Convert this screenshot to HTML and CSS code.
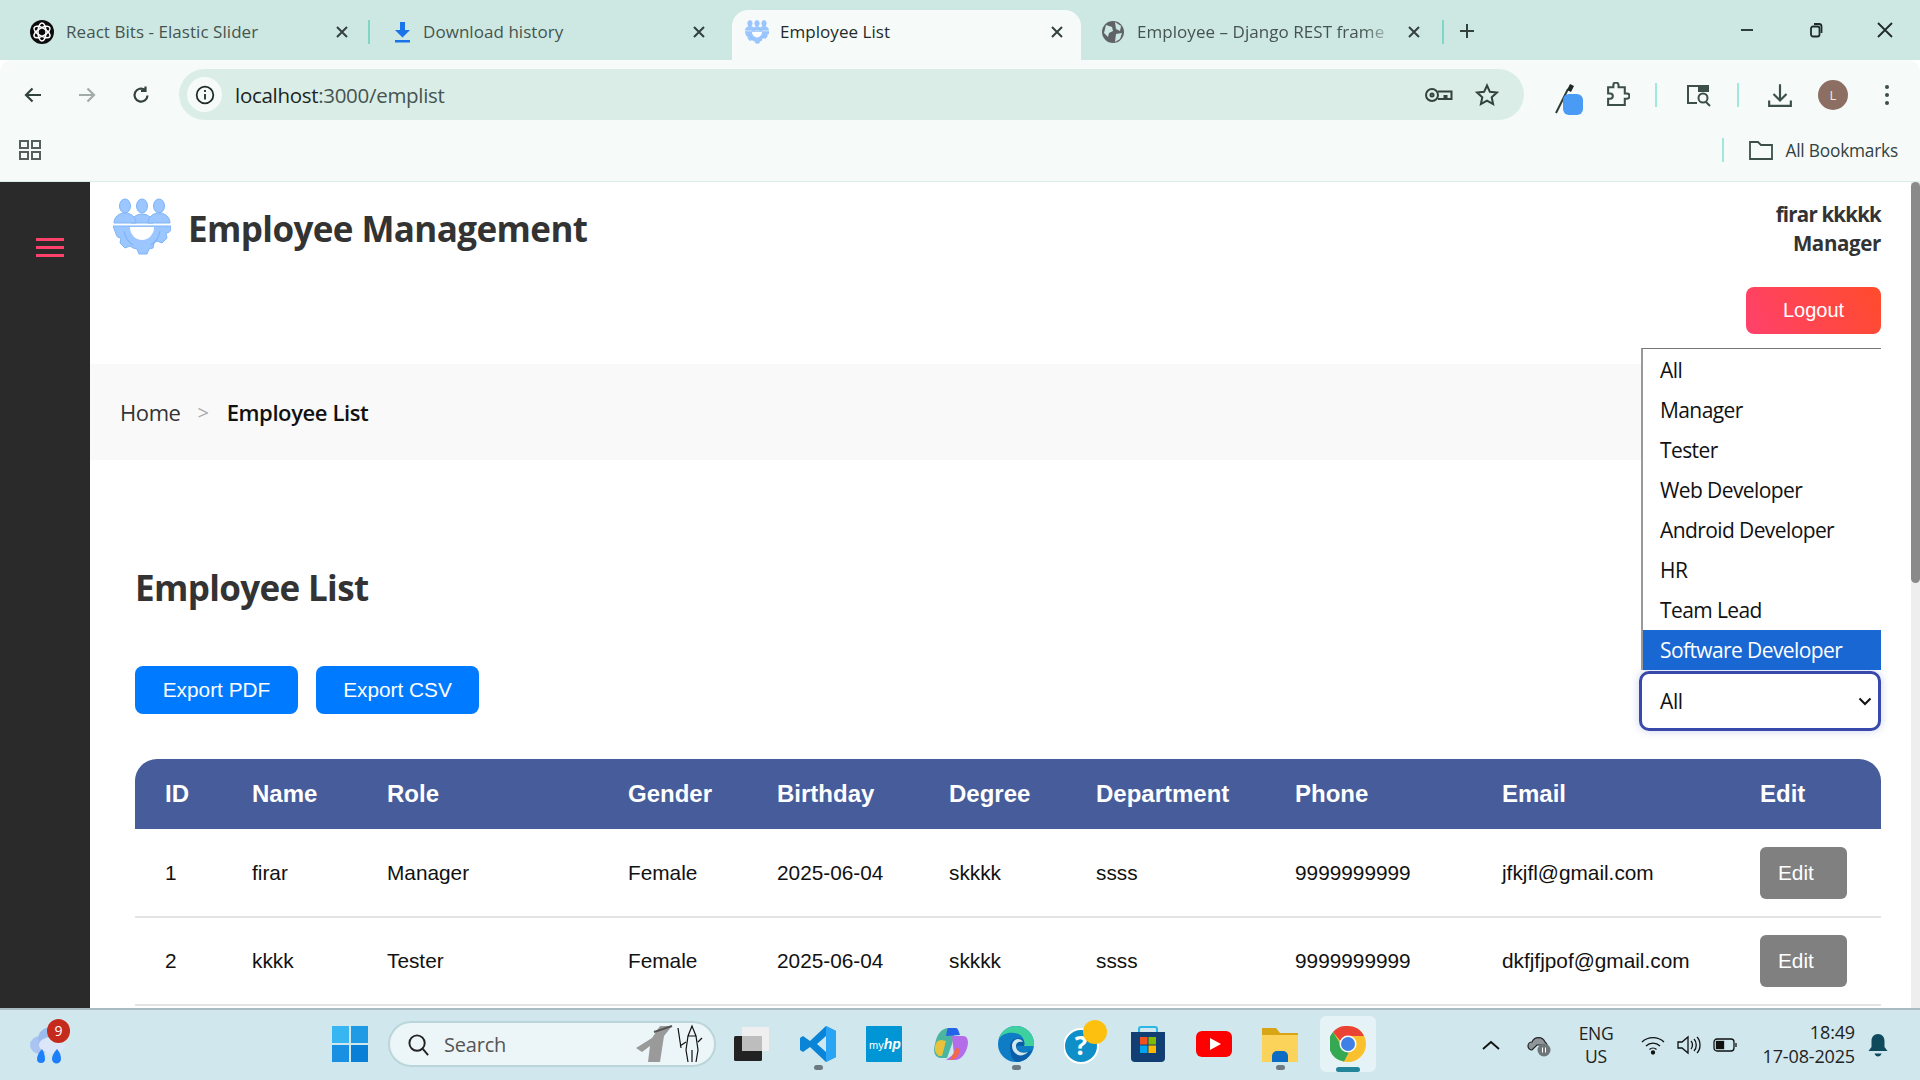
FILE: index.html
```html
<!DOCTYPE html>
<html lang="en">
<head>
    <meta charset="UTF-8">
    <title>Employee List</title>
    <link rel="stylesheet" href="styles.css">
</head>
<body>
<!-- Browser tabs -->
<div class="tabstrip">
    <div class="tab tab-first">
        <svg class="tab-icon" viewBox="0 0 24 24"><circle cx="12" cy="12" r="12" fill="#0b0b0b"/><g fill="none" stroke="#fff" stroke-width="1.5"><ellipse cx="12" cy="12" rx="9" ry="4" transform="rotate(30 12 12)"/><ellipse cx="12" cy="12" rx="9" ry="4" transform="rotate(90 12 12)"/><ellipse cx="12" cy="12" rx="9" ry="4" transform="rotate(150 12 12)"/></g></svg>
        <span class="tab-title">React Bits - Elastic Slider</span>
        <svg class="tab-close" viewBox="0 0 14 14"><path d="M2 2l10 10M12 2L2 12"/></svg>
    </div>
    <div class="tab-sep"></div>
    <div class="tab tab-second">
        <svg class="tab-icon" viewBox="0 0 24 24"><path d="M10 2h5v8h5l-7.500 7.500L5 10h5z" fill="#1a73e8"/><rect x="5" y="20" width="15" height="2.500" fill="#1a73e8"/></svg>
        <span class="tab-title">Download history</span>
        <svg class="tab-close" viewBox="0 0 14 14"><path d="M2 2l10 10M12 2L2 12"/></svg>
    </div>
    <div class="tab tab-active">
        <svg class="tab-icon" viewBox="0 0 58 58"><use href="#logo-mark"/></svg>
        <span class="tab-title">Employee List</span>
        <svg class="tab-close" viewBox="0 0 14 14"><path d="M2 2l10 10M12 2L2 12"/></svg>
    </div>
    <div class="tab tab-last">
        <svg class="tab-icon" viewBox="0 0 24 24"><circle cx="12" cy="12" r="11" fill="#5f6368"/><path d="M5 5l6 2 1 4-4 2-1 4-4-4zM14 2l6 4-1 5-4-2zM15 14l6-1-2 6-5 3z" fill="#cde8e2"/></svg>
        <span class="tab-title tab-title-fade">Employee – Django REST frame</span>
        <svg class="tab-close" viewBox="0 0 14 14"><path d="M2 2l10 10M12 2L2 12"/></svg>
    </div>
    <div class="tab-sep"></div>
    <svg class="new-tab" viewBox="0 0 16 16"><path d="M8 1v14M1 8h14"/></svg>
    <div class="window-btns">
        <svg viewBox="0 0 16 16"><path d="M2 8h12"/></svg>
        <svg viewBox="0 0 16 16"><rect x="3" y="4.500" width="8.500" height="10" rx="2"/><path d="M6 2h5a2.500 2.500 0 0 1 2.500 2.500V11"/></svg>
        <svg viewBox="0 0 16 16"><path d="M1 1l14 14M15 1L1 15"/></svg>
    </div>
</div>

<!-- Address bar -->
<div class="toolbar">
    <svg class="nav-icon" viewBox="0 0 18 18"><path d="M17 9H2M8.500 2.500L2 9l6.500 6.500"/></svg>
    <svg class="nav-icon nav-disabled" viewBox="0 0 18 18"><path d="M1 9h15M9.500 2.500L16 9l-6.500 6.500"/></svg>
    <svg class="nav-icon" viewBox="0 0 18 18"><path d="M15.500 9.500A6.500 6.500 0 1 1 13 4M13.500 0.500V5H9"/></svg>
    <div class="omnibox">
        <span class="site-info"><svg viewBox="0 0 18 18"><circle cx="9" cy="9" r="7.500"/><path d="M9 8v5M9 4.500v1.800"/></svg></span>
        <span class="url">localhost<span class="url-rest">:3000/emplist</span></span>
        <svg class="omni-icon omni-key" viewBox="0 0 30 20"><circle cx="8" cy="10" r="6"/><circle cx="8" cy="10" r="1.500"/><path d="M14 6.500h13.500v7.500h-5V11h-2v3H14"/></svg>
        <svg class="omni-icon omni-star" viewBox="0 0 24 24"><path d="M12 2.500l2.900 6.300 6.900.8-5.100 4.700 1.400 6.800-6.100-3.400-6.100 3.400 1.400-6.800-5.100-4.700 6.900-.8z"/></svg>
    </div>
    <div class="toolbar-right">
        <svg class="tool-icon tool-dropper" viewBox="0 0 30 32"><path d="M2 30L14 6" stroke="#2d3a36" stroke-width="2" fill="none"/><path d="M13 7l3-6 4 2-3 6z" fill="#1f2a27"/><rect x="9" y="11" width="20" height="21" rx="6" fill="#4a9bf5"/></svg>
        <svg class="tool-icon tool-puzzle" viewBox="0 0 24 24"><path d="M3 5h5V3a2.500 2.500 0 0 1 5 0v2h6v6h2a2 2 0 0 1 0 5h-2v6H3v-6h2a2.500 2.500 0 0 0 0-5H3z"/></svg>
        <span class="tool-sep"></span>
        <svg class="tool-icon tool-media" viewBox="0 0 28 24"><path d="M12 20H3V3h20v6" /><rect x="14" y="3" width="9" height="5" fill="#3c4f49"/><circle cx="18" cy="15" r="4.500"/><path d="M21 19l4 4"/></svg>
        <span class="tool-sep"></span>
        <svg class="tool-icon tool-download" viewBox="0 0 24 24"><path d="M12 2v14M6 11l6 6 6-6M2 17v5h20v-5"/></svg>
        <span class="avatar">L</span>
        <svg class="tool-dots" viewBox="0 0 6 24"><circle cx="3" cy="4" r="2"/><circle cx="3" cy="12" r="2"/><circle cx="3" cy="20" r="2"/></svg>
    </div>
</div>

<!-- Bookmarks bar -->
<div class="bookmarks">
    <svg class="apps-icon" viewBox="0 0 22 20"><rect x="1" y="1" width="8" height="7"/><rect x="13" y="1" width="8" height="7"/><rect x="1" y="12" width="8" height="7"/><rect x="13" y="12" width="8" height="7"/></svg>
    <span class="tool-sep bookmark-sep"></span>
    <svg class="folder-icon" viewBox="0 0 24 20"><path d="M1 2h8l3 3h11v14H1z"/></svg>
    <span class="bookmark-label">All Bookmarks</span>
</div>

<!-- Page -->
<div class="page">
    <aside class="sidebar">
        <div class="hamburger"><span></span><span></span><span></span></div>
    </aside>
    <main class="content">
        <header class="page-header">
            <div class="brand">
                <svg class="brand-logo" viewBox="0 0 58 58">
                    <g id="logo-mark">
                        <g fill="#9cc6ff" stroke="#7fb4f7" stroke-width="1">
                            <ellipse cx="12" cy="8" rx="5.500" ry="7"/>
                            <ellipse cx="29" cy="8" rx="5.500" ry="7"/>
                            <ellipse cx="46" cy="8" rx="5.500" ry="7"/>
                            <path d="M18 25a11 9 0 0 1 22 0z"/>
                            <path d="M1 25c0-6 5-10 11-10s11 4 11 10z"/>
                            <path d="M35 25c0-6 5-10 11-10s11 4 11 10z"/>
                            <path d="M0 28h58v3c0 2-2 4-5 4l1 5-5 5-5-2-3 2-1 5-4 1-2 5h-8l-2-5-4-1-3-2-5 2-5-5 1-5c-3 0-5-2-5-4z"/>
                        </g>
                        <path d="M17 29a12 13 0 0 0 24 0z" fill="#fff"/>
                        <path d="M11 33c1 6 4 11 9 14M47 33c-1 6-4 11-9 14" fill="none" stroke="#7fb4f7" stroke-width="1.200"/>
                    </g>
                </svg>
                <h1 class="brand-title">Employee Management</h1>
            </div>
            <div class="user-box">
                <div class="user-name">firar kkkkk</div>
                <div class="user-role">Manager</div>
                <button class="logout-btn">Logout</button>
            </div>
        </header>

        <nav class="breadcrumb">
            <a href="#" class="crumb">Home</a>
            <span class="crumb-sep">&gt;</span>
            <span class="crumb-current">Employee List</span>
        </nav>

        <section class="list-section">
            <h2 class="list-title">Employee List</h2>
            <div class="list-actions">
                <div class="export-btns">
                    <button class="export-btn">Export PDF</button>
                    <button class="export-btn">Export CSV</button>
                </div>
                <div class="role-filter">
                    <span>All</span>
                    <svg viewBox="0 0 14 9"><path d="M1.500 1.500L7 7l5.500-5.500"/></svg>
                </div>
            </div>
            <table class="emp-table">
                <colgroup>
                    <col class="col-id"><col class="col-name"><col class="col-role"><col class="col-gender"><col class="col-birthday">
                    <col class="col-degree"><col class="col-dept"><col class="col-phone"><col class="col-email"><col class="col-edit">
                </colgroup>
                <thead>
                    <tr><th>ID</th><th>Name</th><th>Role</th><th>Gender</th><th>Birthday</th><th>Degree</th><th>Department</th><th>Phone</th><th>Email</th><th>Edit</th></tr>
                </thead>
                <tbody>
                    <tr>
                        <td>1</td><td>firar</td><td>Manager</td><td>Female</td><td>2025-06-04</td><td>skkkk</td><td>ssss</td><td>9999999999</td><td>jfkjfl@gmail.com</td>
                        <td><button class="edit-btn">Edit</button></td>
                    </tr>
                    <tr>
                        <td>2</td><td>kkkk</td><td>Tester</td><td>Female</td><td>2025-06-04</td><td>skkkk</td><td>ssss</td><td>9999999999</td><td>dkfjfjpof@gmail.com</td>
                        <td><button class="edit-btn">Edit</button></td>
                    </tr>
                </tbody>
            </table>
        </section>

        <!-- Open select list -->
        <ul class="role-menu">
            <li>All</li>
            <li>Manager</li>
            <li>Tester</li>
            <li>Web Developer</li>
            <li>Android Developer</li>
            <li>HR</li>
            <li>Team Lead</li>
            <li class="selected">Software Developer</li>
        </ul>
    </main>
    <div class="scrollbar"><div class="scroll-thumb"></div></div>
</div>

<!-- Windows taskbar -->
<footer class="taskbar">
    <div class="weather">
        <svg viewBox="0 0 38 44"><ellipse cx="11" cy="22" rx="10" ry="9" fill="#a9c4f0"/><ellipse cx="22" cy="16" rx="13" ry="12" fill="#9dbcee"/><ellipse cx="23" cy="22" rx="13" ry="8" fill="#dbe6f8"/><path d="M13 26c2 3 3 7 3 10a4 4 0 0 1-8 0c0-3 2-7 5-10zM28 26c3 3 4 7 4 10a4.500 4.500 0 0 1-9 0c0-3 2-7 5-10z" fill="#1e7ffb"/></svg>
        <span class="weather-badge">9</span>
    </div>
    <div class="task-center">
        <svg class="task-icon win-logo" viewBox="0 0 36 36"><rect width="17" height="17" fill="#37b6f1"/><rect x="19" width="17" height="17" fill="#1f9be6"/><rect y="19" width="17" height="17" fill="#1a90e2"/><rect x="19" y="19" width="17" height="17" fill="#0a7fd8"/></svg>
        <div class="search-pill">
            <svg viewBox="0 0 24 24"><circle cx="10.500" cy="10.500" r="8"/><path d="M16.500 16.500L22 23"/></svg>
            <span class="search-label">Search</span>
            <svg class="doodle" viewBox="0 0 70 40"><path d="M2 24l16-10 8-12h12l-8 10-4 26H14l2-16-8 6z" fill="#9a9a9a"/><path d="M20 8L38 2" stroke="#555" stroke-width="2"/><g fill="none" stroke="#111" stroke-width="1.200"><path d="M44 4l3 20M58 2l-4 10h8zM54 12h8l2 14-2 12M54 12l-2 14 2 12M52 18l-6 4M64 18l4-4M58 26v12"/></g></svg>
        </div>
        <svg class="task-icon stack-icon" viewBox="0 0 36 36"><rect y="10" width="28" height="25" rx="1.500" fill="#222"/><rect x="8" y="1" width="27" height="24" fill="#efefef"/><rect x="8" y="10" width="20" height="15" fill="#bdbdbd"/></svg>
        <div class="task-slot">
            <svg class="task-icon" viewBox="0 0 36 36"><path d="M26 0l10 5v26l-10 5-16-15-7 5-3-2V12l3-2 7 5zM26 10l-9 8 9 8z" fill="#0a84d6"/><path d="M26 0l10 5v26l-10 5z" fill="#2aa4f4"/></svg>
            <span class="task-dot"></span>
        </div>
        <svg class="task-icon" viewBox="0 0 36 36"><rect width="36" height="36" rx="1" fill="#0096d6"/><text x="3" y="23" class="myhp-text">my<tspan class="myhp-hp">hp</tspan></text></svg>
        <svg class="task-icon" viewBox="0 0 36 36"><path d="M3 18C5 8 9 3 16 2h8l-4 16-5 14H8c-6-1-7-8-5-14z" fill="#4bb5a0"/><path d="M16 2h8c2 0 3 4 4 7l-14 1c1-4 1-7 2-8z" fill="#2563eb"/><path d="M20 10h11c5 0 6 6 4 12-2 6-6 12-12 12h-9l8-6z" fill="#b46de8"/><path d="M3 20c1-4 3-6 6-6l5 1-4 15H7c-3-2-5-6-4-10z" fill="#e8c23a"/><path d="M18 34l6-12 4 1c-1 5-3 10-8 11z" fill="#f2694a"/></svg>
        <div class="task-slot">
            <svg class="task-icon" viewBox="0 0 36 36"><circle cx="18" cy="18" r="18" fill="#0e7dc5"/><path d="M36 18c0-9-7-18-18-18C10 0 3 5 1 13c3-5 9-7 15-6 9 1 12 8 9 13h11z" fill="#3fd0a0"/><path d="M12 20c0-5 4-8 8-8s8 3 6 8h-7c-1 4 3 7 9 6 2 0 4-1 6-2-2 7-8 12-15 12-6-2-7-11-7-16z" fill="#0b5fa8"/><path d="M14 20c0-4 3-7 6-7 2 0 4 1 5 3-3-1-7 0-7 4 0 5 5 8 12 6-3 3-7 4-10 3-4-2-6-5-6-9z" fill="#cfe7ed"/></svg>
            <span class="task-dot"></span>
        </div>
        <div class="help-icon">
            <svg viewBox="0 0 44 44"><circle cx="17" cy="26" r="17" fill="#0e8fc8" stroke="#fff" stroke-width="2"/><text x="17" y="35" class="help-mark">?</text><ellipse cx="31" cy="12" rx="12" ry="12" fill="#fdc00f"/></svg>
        </div>
        <svg class="task-icon" viewBox="0 0 36 36"><path d="M9 7V3a2 2 0 0 1 2-2h14a2 2 0 0 1 2 2v4" fill="none" stroke="#2bb7e6" stroke-width="2"/><path d="M1 6h34v26a4 4 0 0 1-4 4H5a4 4 0 0 1-4-4z" fill="#113f73"/><rect x="10" y="11" width="7.500" height="7.500" fill="#f25022"/><rect x="18.500" y="11" width="7.500" height="7.500" fill="#7fba00"/><rect x="10" y="19.500" width="7.500" height="7.500" fill="#00a4ef"/><rect x="18.500" y="19.500" width="7.500" height="7.500" fill="#ffb900"/></svg>
        <svg class="task-icon" viewBox="0 0 36 36"><rect y="5" width="36" height="26" rx="6" fill="#f00"/><path d="M14 12l11 6-11 6z" fill="#fff"/></svg>
        <div class="task-slot">
            <svg class="task-icon" viewBox="0 0 36 36"><path d="M0 2h14l4 5h18v29H0z" fill="#d9a514"/><rect y="9" width="36" height="27" fill="#fcd35a"/><path d="M10 36v-6a5 5 0 0 1 5-5h6a5 5 0 0 1 5 5v6z" fill="#0a6cc2"/></svg>
            <span class="task-dot"></span>
        </div>
        <div class="task-active">
            <svg class="task-icon" viewBox="0 0 36 36"><circle cx="18" cy="18" r="18" fill="#fbc02d"/><path d="M18 0a18 18 0 0 1 16 10H18a8 8 0 0 0-7.500 5L3 6a18 18 0 0 1 15-6z" fill="#ea4335"/><path d="M3 6l8 13a8 8 0 0 0 8 7l-5 9.500A18 18 0 0 1 3 6z" fill="#34a853"/><circle cx="18" cy="18" r="8.500" fill="#fff"/><circle cx="18" cy="18" r="7" fill="#3f7fe6"/></svg>
            <span class="task-bar"></span>
        </div>
    </div>
    <div class="tray">
        <svg class="tray-chevron" viewBox="0 0 18 10"><path d="M1 9l8-7 8 7"/></svg>
        <svg class="tray-cloud" viewBox="0 0 24 24"><path d="M5 17a4 4 0 0 1 0-8 7 7 0 0 1 13 0 4 4 0 0 1 2 3H10z" fill="#8f9699" stroke="#222" stroke-width="1.200"/><circle cx="17" cy="17" r="6.500" fill="#6f7678"/><path d="M15.500 14.500v5M18.500 14.500v5" stroke="#fff" stroke-width="1"/></svg>
        <div class="tray-lang"><div>ENG</div><div>US</div></div>
        <svg class="tray-icon" viewBox="0 0 24 20"><path d="M1 7a16 16 0 0 1 22 0M5 11a10 10 0 0 1 14 0M8.500 14.500a5 5 0 0 1 7 0"/><circle cx="12" cy="17.500" r="1.500" fill="#111"/></svg>
        <svg class="tray-icon" viewBox="0 0 24 20"><path d="M1 7h4l6-5v16l-6-5H1zM14 6c2 2 2 6 0 8M17 4c3 3 3 9 0 12M20 2c4 4 4 12 0 16"/></svg>
        <svg class="tray-icon" viewBox="0 0 24 20"><rect x="1" y="4" width="20" height="12" rx="3"/><rect x="3.500" y="6.500" width="7" height="7" fill="#111"/><path d="M23 8v4"/></svg>
        <div class="tray-clock"><div>18:49</div><div>17-08-2025</div></div>
        <svg class="tray-bell" viewBox="0 0 20 24"><path d="M10 1c4 0 6.500 3 6.500 7v6l3 4H.5l3-4V8c0-4 2.500-7 6.500-7z" fill="#0e4a5c"/><path d="M6.500 20.500h7c-.5 2-2 3-3.500 3s-3-1-3.500-3z" fill="#0e4a5c"/></svg>
    </div>
</footer>
</body>
</html>
```

FILE: styles.css
```css
* {
    box-sizing: border-box;
}

body {
    margin: 0;
    width: 1920px;
    height: 1080px;
    overflow: hidden;
    display: flex;
    flex-direction: column;
    font-family: "Open Sans", "Noto Sans", sans-serif;
    background-color: #fff;
    color: #333;
}

svg {
    display: block;
    flex-shrink: 0;
}

/* Browser tabs */
.tabstrip {
    height: 60px;
    padding: 10px 0 0 8px;
    display: flex;
    align-items: center;
    background-color: #cde8e2;
}

.tab {
    width: 362px;
    height: 50px;
    padding: 0 21px 7px 20px;
    display: flex;
    align-items: center;
    gap: 12px;
    color: #46544f;
    font-size: 17px;
    letter-spacing: 0.05px;
}

.tab-first {
    padding-left: 22px;
    margin-right: -2px;
}

.tab-second {
    padding-right: 26px;
    gap: 9px;
}

.tab-active {
    width: 349px;
    padding: 0 17px 7px 13px;
    gap: 11px;
    border-radius: 16px 16px 0 0;
    background-color: #f6fbf9;
    color: #1f2b28;
}

.tab-last {
    width: 361px;
}

.tab-icon {
    width: 24px;
    height: 24px;
}

.tab-title {
    flex: 1;
    overflow: hidden;
    white-space: nowrap;
}

.tab-title-fade {
    -webkit-mask-image: linear-gradient(to right, #000 88%, transparent);
    mask-image: linear-gradient(to right, #000 88%, transparent);
}

.tab-close {
    width: 14px;
    height: 14px;
    fill: none;
    stroke: #33403c;
    stroke-width: 2;
}

.tab-sep {
    width: 2px;
    height: 24px;
    margin-bottom: 7px;
    background-color: #7fd6c6;
}

.new-tab {
    width: 16px;
    height: 16px;
    margin-left: 15px;
    margin-bottom: 9px;
    fill: none;
    stroke: #33403c;
    stroke-width: 2;
}

.window-btns {
    margin-left: auto;
    margin-right: 27px;
    margin-bottom: 10px;
    display: flex;
    gap: 53px;
}

.window-btns svg {
    width: 16px;
    height: 16px;
    fill: none;
    stroke: #1f2b28;
    stroke-width: 1.8;
}

/* Address bar */
.toolbar {
    height: 68px;
    padding: 9px 0 8px 24px;
    display: flex;
    align-items: center;
    background-color: #f6fbf9;
    border-radius: 12px 12px 0 0;
}

.nav-icon {
    width: 18px;
    height: 18px;
    margin-right: 36px;
    fill: none;
    stroke: #33423e;
    stroke-width: 2.2;
}

.nav-disabled {
    stroke: #a3aba8;
}

.omnibox {
    width: 1345px;
    height: 51px;
    margin-left: -7px;
    padding: 0 25px 0 8px;
    display: flex;
    align-items: center;
    border-radius: 26px;
    background-color: #daede7;
}

.site-info {
    width: 35px;
    height: 35px;
    display: flex;
    align-items: center;
    justify-content: center;
    border-radius: 50%;
    background-color: #f6fbf9;
}

.site-info svg {
    width: 20px;
    height: 20px;
    fill: none;
    stroke: #1f2b28;
    stroke-width: 1.6;
}

.url {
    margin-left: 13px;
    font-size: 20.5px;
    letter-spacing: -0.3px;
    color: #1c2421;
}

.url-rest {
    color: #46544f;
}

.omni-icon {
    fill: none;
    stroke: #33423e;
    stroke-width: 2;
}

.omni-key {
    width: 30px;
    height: 20px;
    margin-left: auto;
}

.omni-star {
    width: 24px;
    height: 24px;
    margin-left: 21px;
}

.toolbar-right {
    display: flex;
    align-items: center;
    margin-left: 30px;
}

.tool-icon {
    fill: none;
    stroke: #3c4f49;
    stroke-width: 2;
}

.tool-dropper {
    width: 30px;
    height: 32px;
    stroke: none;
    margin-top: 8px;
}

.tool-puzzle {
    width: 25px;
    height: 25px;
    margin-left: 21px;
}

.tool-sep {
    width: 2px;
    height: 24px;
    background-color: #9ee8dc;
}

.tool-puzzle + .tool-sep {
    margin-left: 25px;
}

.tool-media {
    width: 28px;
    height: 24px;
    margin-left: 28px;
}

.tool-media + .tool-sep {
    margin-left: 24px;
}

.tool-download {
    width: 26px;
    height: 26px;
    margin-left: 28px;
}

.avatar {
    width: 30px;
    height: 30px;
    margin-left: 25px;
    display: flex;
    align-items: center;
    justify-content: center;
    border-radius: 50%;
    background-color: #8d6e63;
    color: #f2e6e1;
    font-size: 13px;
}

.tool-dots {
    width: 6px;
    height: 24px;
    margin-left: 36px;
    fill: #3c4f49;
}

/* Bookmarks bar */
.bookmarks {
    height: 54px;
    padding: 0 22px 9px 19px;
    display: flex;
    align-items: center;
    background-color: #f6fbf9;
    border-bottom: 1px solid #dcebe6;
}

.apps-icon {
    width: 22px;
    height: 20px;
    fill: none;
    stroke: #555f5c;
    stroke-width: 2;
}

.bookmark-sep {
    margin-left: auto;
}

.folder-icon {
    width: 24px;
    height: 20px;
    margin-left: 25px;
    fill: none;
    stroke: #3c4f49;
    stroke-width: 1.8;
}

.bookmark-label {
    margin-left: 12px;
    font-size: 17.3px;
    letter-spacing: -0.2px;
    color: #33423e;
}

/* Page */
.page {
    height: 826px;
    display: flex;
    overflow: hidden;
}

.sidebar {
    width: 90px;
    padding: 56px 26px 0 36px;
    background-color: #2a2a2a;
}

.hamburger {
    display: flex;
    flex-direction: column;
    gap: 5px;
}

.hamburger span {
    height: 3px;
    background-color: #ff416c;
}

.content {
    position: relative;
    width: 1821px;
    padding-right: 30px;
}

.scrollbar {
    width: 9px;
    background-color: #eee;
}

.scroll-thumb {
    height: 401px;
    border-radius: 5px;
    background-color: #8a8a8a;
}

.page-header {
    height: 182px;
    padding-left: 23px;
    display: flex;
    justify-content: space-between;
}

.brand {
    display: flex;
    align-items: flex-start;
    gap: 17px;
    padding-top: 16px;
}

.brand-logo {
    width: 58px;
    height: 58px;
}

.brand-title {
    margin: 3px 0 0;
    font-size: 35px;
    font-weight: 700;
    letter-spacing: -0.6px;
    line-height: 56px;
    color: #333;
}

.user-box {
    padding-top: 18px;
    display: flex;
    flex-direction: column;
    align-items: flex-end;
    font-size: 20.5px;
    font-weight: 700;
    letter-spacing: -0.35px;
    line-height: 29px;
}

.user-name {
    letter-spacing: -0.8px;
}

.logout-btn {
    width: 135px;
    height: 47px;
    margin-top: 29px;
    border: none;
    border-radius: 8px;
    background: linear-gradient(60deg, #ff416c, #ff4b2b);
    color: #fff;
    font-family: "Liberation Sans", Arial, sans-serif;
    font-size: 20px;
}

.breadcrumb {
    height: 96px;
    padding-left: 30px;
    display: flex;
    align-items: center;
    background-color: #f9f9f9;
    font-size: 22px;
    letter-spacing: -0.4px;
}

.crumb {
    color: #333;
    text-decoration: none;
}

.crumb-sep {
    margin: 0 18px 0 17px;
    color: #aaa;
    font-size: 20px;
}

.crumb-current {
    font-weight: 600;
    color: #111;
}

.list-section {
    padding: 0 0 0 45px;
}

.list-title {
    margin: 102px 0 0;
    font-size: 35px;
    font-weight: 700;
    letter-spacing: -0.65px;
    line-height: 52px;
    color: #333;
}

.list-actions {
    margin-top: 52px;
    height: 65px;
    display: flex;
    justify-content: space-between;
}

.export-btns {
    display: flex;
    gap: 18px;
}

.export-btn {
    width: 163px;
    height: 48px;
    border: none;
    border-radius: 8px;
    background-color: #007bff;
    color: #fff;
    font-family: "Liberation Sans", Arial, sans-serif;
    font-size: 20.8px;
}

.role-filter {
    width: 242px;
    height: 60px;
    margin-top: 5px;
    padding: 0 6px 0 18px;
    display: flex;
    align-items: center;
    justify-content: space-between;
    border: 3px solid #3949ab;
    border-radius: 10px;
    box-shadow: 0 0 8px rgba(57, 73, 171, 0.25);
    background-color: #fff;
    font-size: 21px;
    letter-spacing: -0.4px;
    color: #111;
}

.role-filter svg {
    width: 14px;
    height: 9px;
    fill: none;
    stroke: #111;
    stroke-width: 2;
}

.role-menu {
    position: absolute;
    top: 166px;
    right: 30px;
    width: 240px;
    margin: 0;
    padding: 1px 0 0;
    list-style: none;
    background-color: #fff;
    border-top: 1px solid #767676;
    border-left: 2px solid #999;
    font-size: 21px;
    letter-spacing: -0.6px;
    color: #111;
}

.role-menu li {
    height: 40px;
    padding-left: 17px;
    line-height: 40px;
}

.role-menu .selected {
    background-color: #1967d2;
    color: #fff;
}

/* Employee table */
.emp-table {
    width: 1746px;
    margin-top: 28px;
    border-collapse: collapse;
    table-layout: fixed;
    font-family: "Liberation Sans", Arial, sans-serif;
    font-size: 20.8px;
    color: #111;
}

.col-id { width: 87px; }
.col-name { width: 135px; }
.col-role { width: 241px; }
.col-gender { width: 149px; }
.col-birthday { width: 172px; }
.col-degree { width: 147px; }
.col-dept { width: 199px; }
.col-phone { width: 207px; }
.col-email { width: 258px; }
.col-edit { width: 151px; }

.emp-table th {
    height: 70px;
    padding: 0 0 0 30px;
    background-color: #465c9b;
    color: #fff;
    font-size: 24px;
    font-weight: 700;
    text-align: left;
}

.emp-table th:first-child {
    border-top-left-radius: 22px;
}

.emp-table th:last-child {
    border-top-right-radius: 22px;
}

.emp-table td {
    height: 88px;
    padding: 0 0 0 30px;
    border-bottom: 2px solid #e2e4e6;
}

.edit-btn {
    width: 87px;
    height: 52px;
    padding: 0 0 0 18px;
    border: none;
    border-radius: 6px;
    background-color: #808080;
    color: #fff;
    font-family: "Liberation Sans", Arial, sans-serif;
    font-size: 20.8px;
    text-align: left;
}

/* Windows taskbar */
.taskbar {
    height: 72px;
    display: flex;
    align-items: center;
    border-top: 2px solid #a9bcc1;
    background-color: #cfe7ed;
    color: #222;
}

.weather {
    position: relative;
    width: 38px;
    height: 44px;
    margin-left: 29px;
}

.weather svg {
    width: 38px;
    height: 44px;
}

.weather-badge {
    position: absolute;
    top: -4px;
    left: 18px;
    width: 23px;
    height: 24px;
    border-radius: 50%;
    background-color: #c42b1c;
    color: #fff;
    font-size: 14px;
    line-height: 24px;
    text-align: center;
}

.task-center {
    margin-left: 265px;
    margin-bottom: 2px;
    display: flex;
    align-items: center;
    gap: 30px;
}

.task-icon {
    width: 36px;
    height: 36px;
}

.win-logo {
    margin-right: -10px;
}

.search-pill {
    width: 328px;
    height: 46px;
    padding: 0 10px 0 17px;
    display: flex;
    align-items: center;
    border: 2px solid #bcd5da;
    border-radius: 23px;
    background-color: #ecf6f8;
    margin-right: -12px;
}

.search-pill > svg:first-child {
    width: 23px;
    height: 23px;
    fill: none;
    stroke: #222;
    stroke-width: 2;
}

.search-label {
    margin-left: 14px;
    font-size: 20px;
    letter-spacing: -0.2px;
    color: #555;
}

.doodle {
    width: 70px;
    height: 40px;
    margin-left: auto;
}

.task-slot {
    position: relative;
    width: 36px;
    height: 36px;
}

.task-dot {
    position: absolute;
    left: 14px;
    bottom: -8px;
    width: 9px;
    height: 5px;
    border-radius: 3px;
    background-color: #6d7a80;
}

.myhp-text {
    fill: #fff;
    font-family: "Liberation Sans", Arial, sans-serif;
    font-size: 11px;
}

.myhp-hp {
    font-size: 14px;
    font-weight: 700;
    font-style: italic;
}

.help-icon {
    width: 44px;
    height: 44px;
    margin: -4px -8px 0 0;
}

.help-icon svg {
    width: 44px;
    height: 44px;
}

.help-mark {
    fill: #fff;
    font-size: 26px;
    font-weight: 700;
    text-anchor: middle;
}

.task-active {
    position: relative;
    width: 56px;
    height: 56px;
    margin-left: -8px;
    display: flex;
    align-items: center;
    justify-content: center;
    border-radius: 6px;
    background-color: #e6f3f6;
}

.task-bar {
    position: absolute;
    left: 16px;
    bottom: 0;
    width: 24px;
    height: 5px;
    border-radius: 3px;
    background-color: #24859a;
}

.tray {
    margin-left: auto;
    margin-right: 32px;
    display: flex;
    align-items: center;
}

.tray-chevron {
    width: 18px;
    height: 10px;
    fill: none;
    stroke: #111;
    stroke-width: 1.8;
}

.tray-cloud {
    width: 24px;
    height: 24px;
    margin-left: 27px;
}

.tray-lang {
    width: 36px;
    margin-left: 27px;
    font-size: 17.5px;
    line-height: 23px;
    text-align: center;
    letter-spacing: -0.3px;
}

.tray-icon {
    width: 24px;
    height: 20px;
    margin-left: 12px;
    fill: none;
    stroke: #111;
    stroke-width: 1.3;
}

.tray-lang + .tray-icon {
    margin-left: 27px;
}

.tray-clock {
    width: 100px;
    margin-left: 18px;
    margin-bottom: 2px;
    font-size: 18px;
    line-height: 24px;
    text-align: right;
    letter-spacing: -0.15px;
}

.tray-bell {
    width: 20px;
    height: 24px;
    margin-left: 13px;
}
```
